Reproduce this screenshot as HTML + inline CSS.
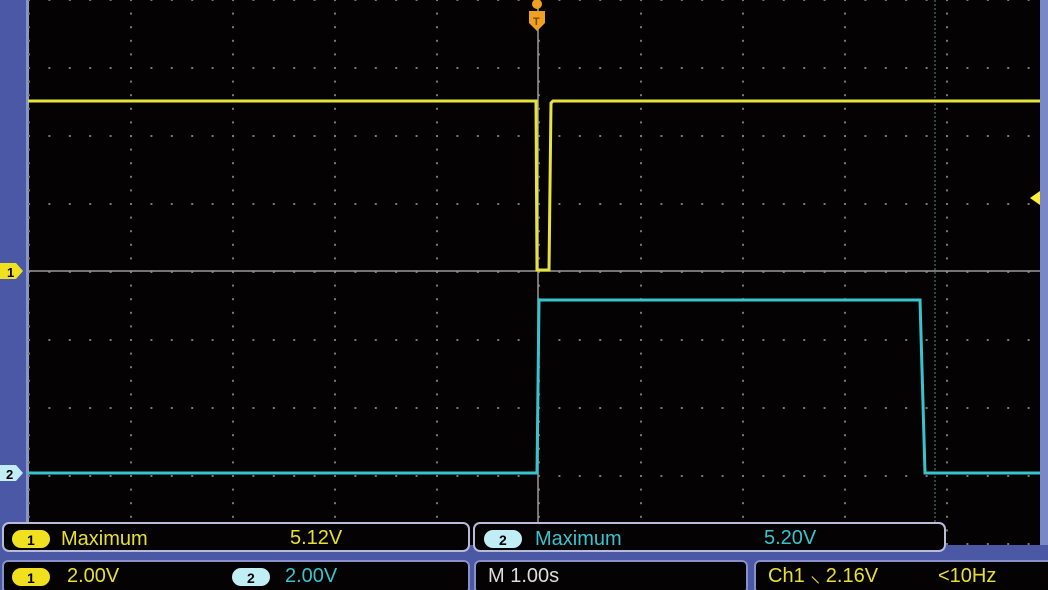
<!DOCTYPE html>
<html><head><style>
body{margin:0;width:1048px;height:590px;overflow:hidden;background:#4a58a6;font-family:"Liberation Sans",sans-serif}
.t{position:absolute;font-size:20px;line-height:20px}
</style></head><body>
<svg width="1048" height="590" style="position:absolute;left:0;top:0">
<defs>
<pattern id="minH" x="28" y="-1" width="20.4" height="68" patternUnits="userSpaceOnUse"><rect x="0" y="0" width="2" height="2" fill="#777"/></pattern>
<pattern id="minV" x="28" y="-1" width="102" height="13.6" patternUnits="userSpaceOnUse"><rect x="0" y="0" width="2" height="2" fill="#777"/></pattern>
</defs>
<rect x="26" y="0" width="1016" height="545" fill="#050203"/>
<rect x="26" y="0" width="3" height="545" fill="#8a96c8"/>
<rect x="1040" y="0" width="8" height="545" fill="#7a88c8"/>
<rect x="28" y="0" width="1012" height="545" fill="url(#minH)"/>
<rect x="28" y="0" width="1012" height="545" fill="url(#minV)"/>
<line x1="28" y1="271" x2="1040" y2="271" stroke="#999" stroke-width="1.5"/>
<line x1="538" y1="0" x2="538" y2="545" stroke="#999" stroke-width="1.5"/>
<line x1="935" y1="0" x2="935" y2="545" stroke="#5a8a8a" stroke-width="1" stroke-dasharray="2,2"/>
<polyline points="28,101 536,101 537,270 549,270 551,103 553,101 1040,101" fill="none" stroke="#e6e43a" stroke-width="3"/>
<polyline points="28,473 537,473 539,300 920,300 925,473 1040,473" fill="none" stroke="#38c4cc" stroke-width="3"/>
<path d="M529,11 h16 v12 l-8,8 l-8,-8 z" fill="#f0a020"/>
<text x="533" y="25" font-size="11" font-weight="bold" fill="#7a4a00" font-family="Liberation Sans">T</text>
<circle cx="537" cy="4" r="5" fill="#f0a020"/>
<path d="M1030,198 l10,-7 v14 z" fill="#ffee33"/>
<path d="M0,263 h16 l7,8 l-7,8 h-16 z" fill="#f0e020"/>
<path d="M0,465 h16 l7,8 l-7,8 h-16 z" fill="#c0eef4"/>
<text x="7" y="277" font-size="13" font-weight="bold" font-family="Liberation Sans">1</text>
<text x="6" y="479" font-size="13" font-weight="bold" font-family="Liberation Sans">2</text>
<rect x="3" y="523" width="466" height="28" rx="6" fill="#050203" stroke="#b8bcd8" stroke-width="2"/>
<rect x="474" y="523" width="471" height="28" rx="6" fill="#050203" stroke="#b8bcd8" stroke-width="2"/>
<rect x="3" y="561" width="466" height="32" rx="5" fill="#050203" stroke="#8890c8" stroke-width="2"/>
<rect x="475" y="561" width="272" height="32" rx="5" fill="#050203" stroke="#8890c8" stroke-width="2"/>
<rect x="755" y="561" width="300" height="32" rx="5" fill="#050203" stroke="#8890c8" stroke-width="2"/>
<rect x="12" y="530" width="38" height="18" rx="9" fill="#f0e020"/>
<rect x="484" y="530" width="38" height="18" rx="9" fill="#c0eef4"/>
<rect x="12" y="568" width="38" height="18" rx="9" fill="#f0e020"/>
<rect x="232" y="568" width="38" height="18" rx="9" fill="#c0eef4"/>
<g font-family="Liberation Sans" font-size="14" font-weight="bold" fill="#000">
<text x="27" y="545">1</text><text x="499" y="545">2</text><text x="27" y="583">1</text><text x="247" y="583">2</text></g>
</svg>
<div class="t" style="left:61px;top:529px;color:#e8e030">Maximum</div>
<div class="t" style="left:290px;top:528px;color:#e8e030">5.12V</div>
<div class="t" style="left:535px;top:529px;color:#38c4cc">Maximum</div>
<div class="t" style="left:764px;top:528px;color:#38c4cc">5.20V</div>
<div class="t" style="left:67px;top:566px;color:#e8e030">2.00V</div>
<div class="t" style="left:285px;top:566px;color:#38c4cc">2.00V</div>
<div class="t" style="left:488px;top:566px;color:#ddd">M 1.00s</div>
<div class="t" style="left:768px;top:566px;color:#e8e030">Ch1 ⸜ 2.16V</div>
<div class="t" style="left:938px;top:566px;color:#e8e030">&lt;10Hz</div>
</body></html>
